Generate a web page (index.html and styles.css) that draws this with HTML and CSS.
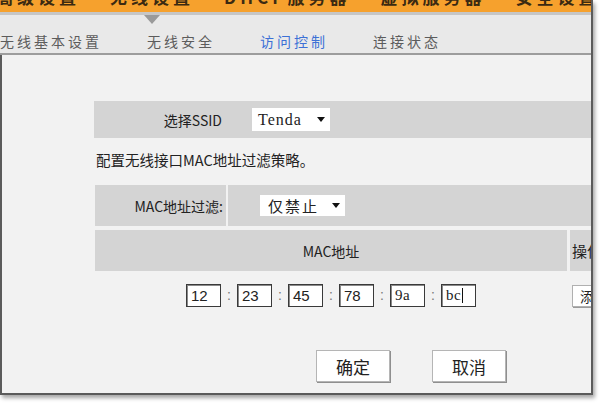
FILE: index.html
```html
<!DOCTYPE html>
<html lang="zh-CN">
<head>
<meta charset="utf-8">
<title>访问控制</title>
<link rel="stylesheet" href="styles.css">
</head>
<body>
<div class="frame">
  <div class="topbar">
    <span class="top-item first">高级设置</span>
    <span class="top-item">无线设置</span>
    <span class="top-item">DHCP服务器</span>
    <span class="top-item">虚拟服务器</span>
    <span class="top-item">安全设置</span>
  </div>
  <div class="sep"></div>
  <div class="nav">
    <span class="pointer"></span>
    <a class="nav-item first">无线基本设置</a>
    <a class="nav-item">无线安全</a>
    <a class="nav-item active">访问控制</a>
    <a class="nav-item">连接状态</a>
  </div>
  <div class="content">
    <div class="panel">
      <div class="ssid-row">
        <span class="ssid-label">选择SSID</span>
        <span class="select ssid-select"><span class="sel-text mono">Tenda</span><i class="caret"></i></span>
      </div>
      <p class="desc">配置无线接口MAC地址过滤策略。</p>
      <div class="row filter-row">
        <div class="cell filter-label">MAC地址过滤:</div>
        <div class="cell filter-value">
          <span class="select mode-select"><span class="sel-text">仅禁止</span><i class="caret"></i></span>
        </div>
      </div>
      <div class="row header-row">
        <div class="cell head-main">MAC地址</div>
        <div class="cell head-op">操作</div>
      </div>
      <div class="row input-row">
        <div class="mac-fields">
          <span class="field">12</span><span class="colon">:</span>
          <span class="field">23</span><span class="colon">:</span>
          <span class="field">45</span><span class="colon">:</span>
          <span class="field">78</span><span class="colon">:</span>
          <span class="field mono">9a</span><span class="colon">:</span>
          <span class="field mono">bc<i class="cursor"></i></span>
        </div>
        <div class="op-cell"><span class="small-btn">添加</span></div>
      </div>
      <div class="actions">
        <span class="btn">确定</span>
        <span class="btn">取消</span>
      </div>
    </div>
  </div>
</div>
</body>
</html>
```

FILE: styles.css
```css
* { box-sizing: border-box; }

body {
  margin: 0;
  width: 600px;
  height: 404px;
  overflow: hidden;
  background: #ffffff;
  font-family: "Noto Sans CJK SC", "Liberation Sans", sans-serif;
  color: #222;
}

.frame {
  width: 593px;
  height: 395px;
  display: flex;
  flex-direction: column;
  overflow: hidden;
  background: #f2f2f2;
  border-right: 2px solid #5b5b5b;
  border-bottom: 2px solid #5b5b5b;
  box-shadow: 2px 3px 4px rgba(0, 0, 0, 0.35);
}

/* top orange menu (cut off by the viewport) */
.topbar {
  flex: none;
  height: 12px;
  background: #f6a12d;
  overflow: hidden;
  display: flex;
  gap: 30px;
}
.top-item {
  margin-top: -11px;
  font-size: 17px;
  line-height: 16px;
  font-weight: bold;
  letter-spacing: 4px;
  color: #3b2a12;
  white-space: nowrap;
}
.top-item.first { margin-left: -4px; }

.sep {
  flex: none;
  height: 3px;
  background: #c6c6c6;
}

/* second-level nav */
.nav {
  position: relative;
  flex: none;
  height: 40px;
  background: #e9e9e9;
  border-bottom: 2px solid #9d9d9d;
  display: flex;
  align-items: flex-end;
  gap: 45px;
  padding-bottom: 5px;
}
.pointer {
  position: absolute;
  left: 144px;
  top: 0;
  width: 0;
  height: 0;
  border-left: 8px solid transparent;
  border-right: 8px solid transparent;
  border-top: 9px solid #9a9a9a;
}
.nav-item {
  font-size: 14px;
  line-height: 14px;
  letter-spacing: 3px;
  color: #5c5c5c;
  white-space: nowrap;
}
.nav-item.active { color: #3c70d6; }

/* content */
.content {
  flex: 1;
  border-left: 2px solid #5b5b5b;
  background: #f2f2f2;
  padding: 46px 0 0 92px;
  overflow: hidden;
}
.panel { width: 640px; }

.ssid-row {
  height: 37px;
  background: #d4d4d4;
  display: flex;
  align-items: center;
}
.ssid-label {
  width: 128px;
  text-align: right;
  font-size: 14px;
  color: #222;
}
.select {
  display: flex;
  align-items: center;
  background: #ffffff;
}
.ssid-select {
  margin-left: 30px;
  width: 78px;
  height: 23px;
  padding-left: 6px;
}
.sel-text { font-size: 15px; color: #222; }
.mono {
  font-family: "Liberation Serif", "DejaVu Serif", serif;
  letter-spacing: 1px;
}
.ssid-select .sel-text { font-size: 16px; }
.caret {
  width: 0;
  height: 0;
  border-left: 4px solid transparent;
  border-right: 4px solid transparent;
  border-top: 5px solid #111;
  margin-left: auto;
  margin-right: 5px;
}

.desc {
  margin: 12px 0 0 2px;
  font-size: 14.5px;
  line-height: 20px;
  color: #222;
}

.row {
  display: flex;
  margin-left: 1px;
}
.cell {
  background: #d4d4d4;
  display: flex;
  align-items: center;
  font-size: 14px;
  color: #222;
}

.filter-row {
  margin-top: 15px;
  height: 41px;
  gap: 2px;
}
.filter-label {
  width: 131px;
  justify-content: flex-end;
  padding-right: 3px;
}
.filter-value {
  flex: 1;
  padding-left: 32px;
}
.mode-select {
  width: 85px;
  height: 21px;
  padding-left: 8px;
}
.mode-select .sel-text { letter-spacing: 2px; }

.header-row {
  margin-top: 4px;
  height: 41px;
  gap: 3px;
}
.head-main {
  width: 472px;
  justify-content: center;
}
.head-op {
  flex: 1;
  padding-left: 2px;
  font-size: 15px;
}

.input-row {
  height: 48px;
  align-items: center;
}
.mac-fields {
  width: 472px;
  display: flex;
  justify-content: center;
  align-items: center;
}
.field {
  width: 35px;
  height: 23px;
  background: #ffffff;
  border: 1px solid #3a3a3a;
  box-shadow: inset 1px 1px 0 #8a8a8a;
  padding-left: 4px;
  font-family: "Liberation Sans", Arial, sans-serif;
  font-size: 15px;
  line-height: 21px;
  color: #222;
  display: flex;
  align-items: center;
}
.field.mono { font-family: "Liberation Serif", serif; font-size: 15px; letter-spacing: 0.5px; }
.cursor {
  display: inline-block;
  width: 1px;
  height: 15px;
  background: #111;
  margin-left: 1px;
}
.colon {
  width: 16px;
  text-align: center;
  font-family: "Liberation Sans", sans-serif;
  font-size: 14px;
  color: #777;
}
.op-cell {
  flex: 1;
  padding-left: 5px;
}
.small-btn {
  display: inline-flex;
  align-items: center;
  justify-content: center;
  width: 44px;
  height: 22px;
  background: #ffffff;
  border: 1px solid #b0b0b0;
  box-shadow: 1px 1px 0 #9a9a9a;
  font-size: 14px;
  color: #222;
}

.actions {
  margin-top: 31px;
  padding-left: 222px;
  display: flex;
  gap: 42px;
}
.btn {
  width: 74px;
  height: 32px;
  display: flex;
  align-items: center;
  justify-content: center;
  background: #ffffff;
  border: 1px solid #b5b5b5;
  box-shadow: 1px 1px 0 #8f8f8f;
  font-size: 17px;
  color: #222;
}
```
